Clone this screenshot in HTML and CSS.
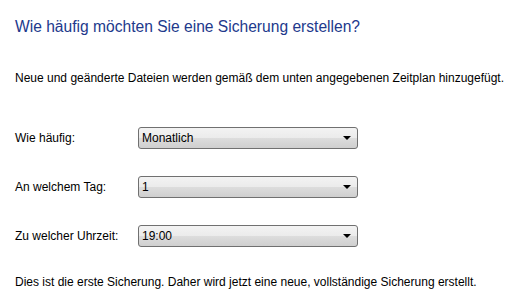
FILE: index.html
```html
<!DOCTYPE html>
<html lang="de">
<head>
<meta charset="UTF-8">
<title>Sicherung</title>
<link rel="stylesheet" href="styles.css">
</head>
<body>
<div class="page">
  <h1 class="title">Wie häufig möchten Sie eine Sicherung erstellen?</h1>
  <p class="intro">Neue und geänderte Dateien werden gemäß dem unten angegebenen Zeitplan hinzugefügt.</p>
  <div class="form">
    <div class="row">
      <span class="label">Wie häufig:</span>
      <div class="combo"><span>Monatlich</span><i class="arrow"></i></div>
    </div>
    <div class="row">
      <span class="label">An welchem Tag:</span>
      <div class="combo"><span>1</span><i class="arrow"></i></div>
    </div>
    <div class="row">
      <span class="label">Zu welcher Uhrzeit:</span>
      <div class="combo"><span>19:00</span><i class="arrow"></i></div>
    </div>
  </div>
  <p class="note">Dies ist die erste Sicherung. Daher wird jetzt eine neue, vollständige Sicherung erstellt.</p>
</div>
</body>
</html>
```
FILE: styles.css
```css
*{margin:0;padding:0;box-sizing:border-box;}
body{background:#fff;font-family:"Liberation Sans",Arial,sans-serif;font-size:12px;color:#000;}
.page{padding:16px 0 0 15px;}
.title{font-size:15.6px;font-weight:normal;color:#22398c;line-height:22px;}
.intro{margin-top:32px;line-height:16px;}
.form{margin-top:41px;display:flex;flex-direction:column;gap:27px;}
.row{display:flex;align-items:center;height:22px;}
.label{width:123px;}
.combo{width:220px;height:22px;border:1px solid #707070;border-radius:3px;display:flex;align-items:center;justify-content:space-between;padding:0 6px 0 3px;
  background:linear-gradient(#f3f3f3 0%,#ebebeb 50%,#dddddd 50%,#cfcfcf 100%);}
.arrow{width:0;height:0;border-left:4px solid transparent;border-right:4px solid transparent;border-top:4px solid #000;}
.note{margin-top:27px;line-height:16px;}
```
